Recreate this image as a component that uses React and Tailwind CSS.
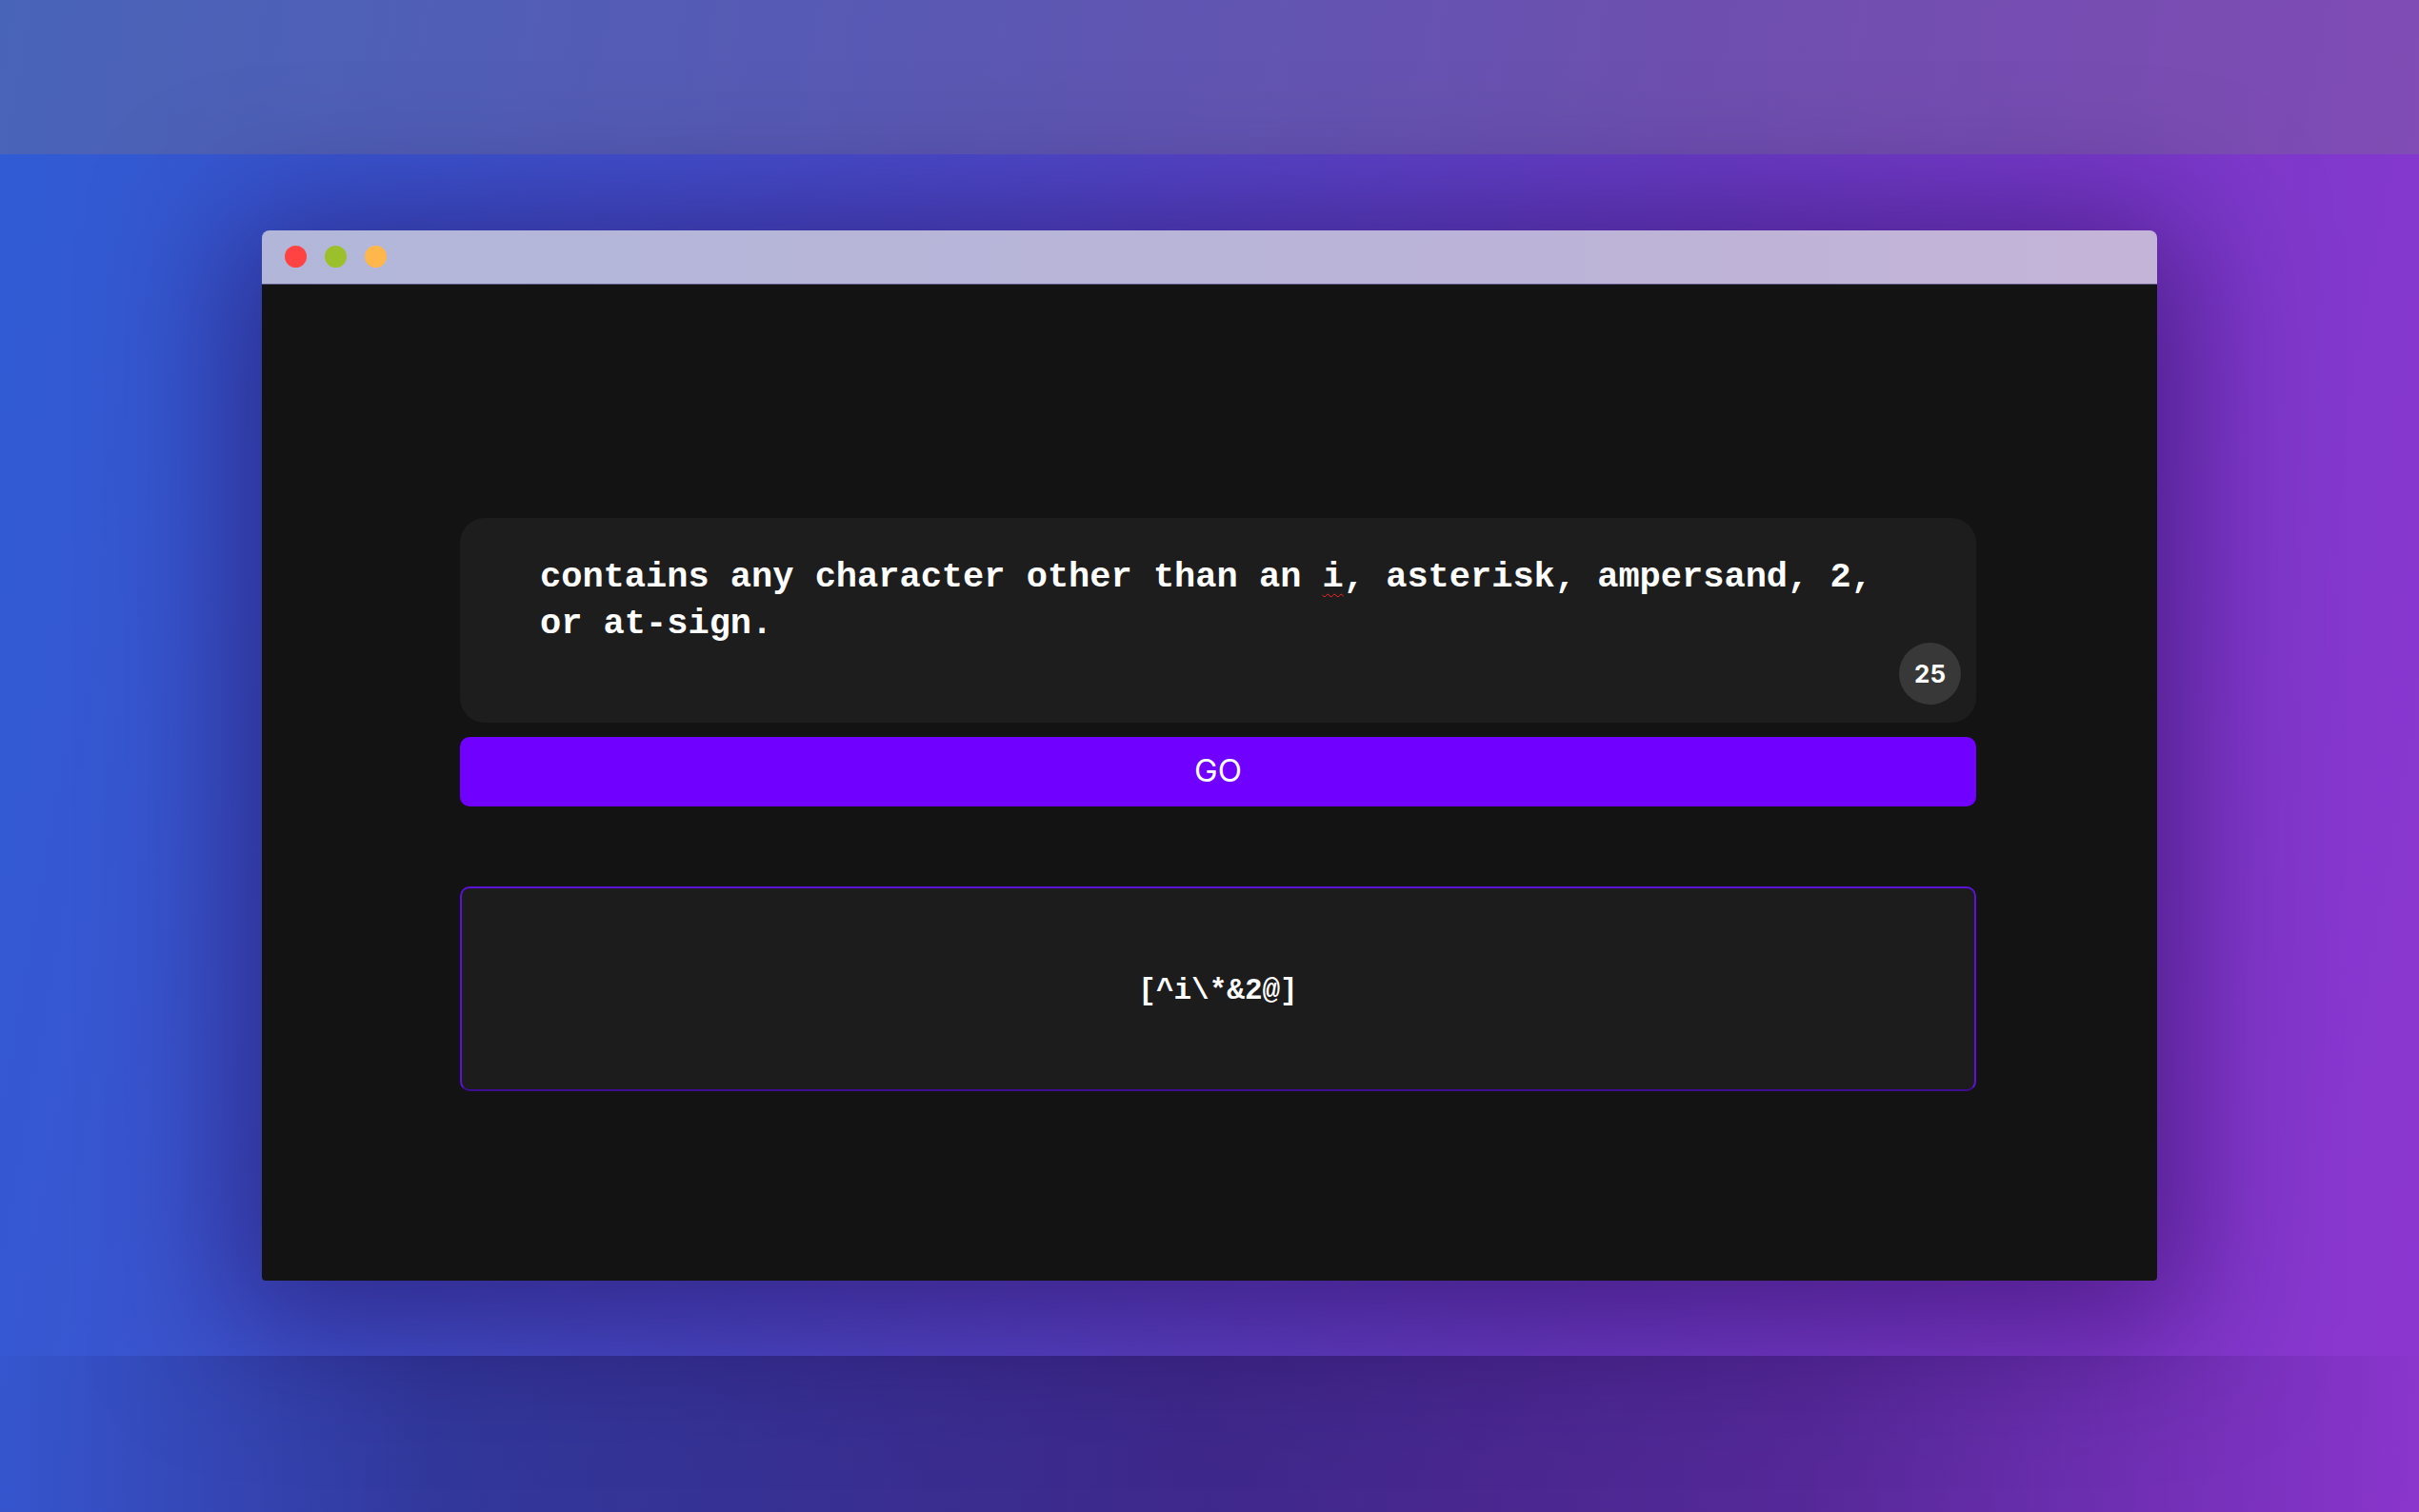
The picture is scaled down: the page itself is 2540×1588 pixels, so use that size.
export default function App() {
    return (
        <div className="relative h-[1588px] w-[2540px] overflow-hidden bg-[linear-gradient(100deg,#2f5cd4_0%,#4a4bcb_35%,#6a3cc6_65%,#8d36d0_100%)] font-['Inter',sans-serif]">
            <div className="h-[162px] bg-[rgba(120,115,135,0.35)]" />
            <div className="flex h-[1262px] items-center justify-center">
                <div className="flex h-[1103px] w-[1990px] flex-col rounded-t-[8px] rounded-b-[4px] shadow-[0_20px_140px_30px_rgba(30,0,70,0.5)]">
                    <div className="flex h-[57px] items-center gap-[19px] rounded-t-[8px] border-b border-[#55507a] bg-[linear-gradient(to_right,#b2b7d9,#bab4d8_60%,#c4b4d8)] pl-[24px]">
                        <span className="h-[23px] w-[23px] rounded-full bg-[#ff4242]" />
                        <span className="h-[23px] w-[23px] rounded-full bg-[#9cbf2c]" />
                        <span className="h-[23px] w-[23px] rounded-full bg-[#ffb64a]" />
                    </div>
                    <div className="flex-1 rounded-b-[4px] bg-[#131313] pl-[208px] pt-[245px]">
                        <div className="flex w-[1592px] flex-col">
                            <div className="relative h-[215px] rounded-[26px] bg-[#1d1d1d] pl-[84px] pt-[38px]">
                                <p className="w-[1420px] font-['Liberation_Mono',monospace] text-[37px] font-bold leading-[49px] text-white">
                                    contains any character other than an <span className="underline decoration-[#ff2626] decoration-wavy decoration-1 underline-offset-[7px]">i</span>, asterisk, ampersand, 2, or at-sign.
                                </p>
                                <span className="absolute bottom-[19px] right-[16px] flex h-[65px] w-[65px] items-center justify-center rounded-full bg-[#383838] text-[26px] font-bold text-white">
                                    25
                                </span>
                            </div>
                            <button className="mt-[15px] h-[73px] rounded-[10px] bg-[#7000ff] text-[33px] text-white">
                                GO
                            </button>
                            <div className="mt-[84px] flex h-[215px] items-center justify-center rounded-[10px] border-2 border-[#5c12d8] border-b-[#3e0c92] bg-[#1c1c1c] pt-[6px]">
                                <span className="font-['Liberation_Mono',monospace] text-[31px] font-bold text-white">[^i\*&amp;2@]</span>
                            </div>
                        </div>
                    </div>
                </div>
            </div>
            <div className="h-[164px] bg-[linear-gradient(to_right,rgba(10,0,40,0.02),rgba(10,0,40,0.3)_18%,rgba(10,0,40,0.38)_50%,rgba(10,0,40,0.3)_75%,rgba(10,0,40,0.02))]" />
        </div>
    );
}
